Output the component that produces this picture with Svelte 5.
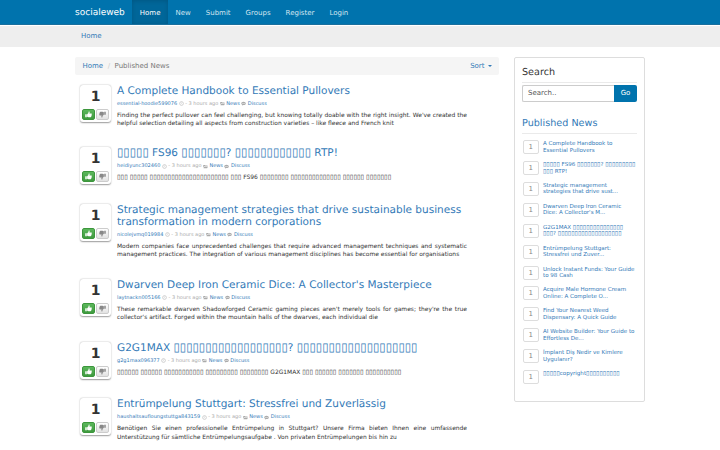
<script lang="ts">
  type Story = { title: string; user: string; body: string };

  const box = (n: number) => '▯'.repeat(n);

  const nav = ['Home', 'New', 'Submit', 'Groups', 'Register', 'Login'];

  const stories: Story[] = [
    {
      title: 'A Complete Handbook to Essential Pullovers',
      user: 'essential-hoodie599076',
      body: "Finding the perfect pullover can feel challenging, but knowing totally doable with the right insight. We've created the helpful selection detailing all aspects from construction varieties – like fleece and French knit"
    },
    {
      title: `${box(5)} FS96 ${box(7)}? ${box(12)} RTP!`,
      user: 'heidiyunc302460',
      body: `${box(3)} ${box(5)} ${box(22)} ${box(3)} FS96 ${box(8)} ${box(14)} ${box(6)} ${box(7)}`
    },
    {
      title: 'Strategic management strategies that drive sustainable business transformation in modern corporations',
      user: 'nicolejvmq019984',
      body: 'Modern companies face unprecedented challenges that require advanced management techniques and systematic management practices. The integration of various management disciplines has become essential for organisations'
    },
    {
      title: "Dwarven Deep Iron Ceramic Dice: A Collector's Masterpiece",
      user: 'laytnackn005166',
      body: "These remarkable dwarven Shadowforged Ceramic gaming pieces aren't merely tools for games; they're the true collector's artifact. Forged within the mountain halls of the dwarves, each individual die"
    },
    {
      title: `G2G1MAX ${box(18)}? ${box(19)}`,
      user: 'g2g1max096377',
      body: `${box(6)} ${box(6)} ${box(11)} ${box(9)} ${box(8)} G2G1MAX ${box(3)} ${box(6)} ${box(7)} ${box(10)}`
    },
    {
      title: 'Entrümpelung Stuttgart: Stressfrei und Zuverlässig',
      user: 'haushaltsaufloungstuttga843159',
      body: 'Benötigen Sie einen professionelle Entrümpelung in Stuttgart? Unsere Firma bieten Ihnen eine umfassende Unterstützung für sämtliche Entrümpelungsaufgabe . Von privaten Entrümpelungen bis hin zu'
    }
  ];

  const published = [
    'A Complete Handbook to\nEssential Pullovers',
    `${box(5)} FS96 ${box(7)}? ${box(9)}\n${box(3)} RTP!`,
    'Strategic management\nstrategies that drive sust...',
    "Dwarven Deep Iron Ceramic\nDice: A Collector's M...",
    `G2G1MAX ${box(15)}\n${box(3)}? ${box(19)}`,
    'Entrümpelung Stuttgart:\nStressfrei und Zuver...',
    'Unlock Instant Funds: Your Guide\nto 98 Cash',
    'Acquire Male Hormone Cream\nOnline: A Complete O...',
    'Find Your Nearest Weed\nDispensary: A Quick Guide',
    'AI Website Builder: Your Guide to\nEffortless De...',
    'İmplant Diş Nedir ve Kimlere\nUygulanır?',
    `${box(5)}copyright${box(10)}`
  ];
</script>

{#snippet thumb()}
  <svg class="thumb" viewBox="0 0 14 14">
    <path d="M0.5 6.5h3v6h-3z" />
    <path d="M4.3 6.7 6.6 4.4 7.4 1.2C8.8.8 9.6 2 9.2 3.6L8.8 5.2h3.6c1.3 0 1.5 1.3.8 1.9.6.6.5 1.5-.2 1.9.3.7.1 1.4-.6 1.8.1 1-.5 1.6-1.6 1.6H7.2c-1.2 0-1.9-.5-2.9-.8z" />
  </svg>
{/snippet}

{#snippet boxed(text: string)}{#each text.split(/(▯+)/) as part, i}{#if i % 2}<span class="boxes">{part}</span>{:else}{part}{/if}{/each}{/snippet}

<div class="page">
  <nav class="navbar">
    <div class="container nav-row">
      <a class="brand" href="#top">socialeweb</a>
      {#each nav as item, i}
        <a class="nav-link" class:active={i === 0} href="#top">{item}</a>
      {/each}
    </div>
  </nav>
  <div class="subnav">
    <div class="container"><a href="#top">Home</a></div>
  </div>

  <div class="container columns">
    <main>
      <div class="breadcrumb">
        <a href="#top">Home</a>
        <span class="slash">/</span>
        <span class="current">Published News</span>
        <a class="sort" href="#top">Sort <i class="caret"></i></a>
      </div>

      {#each stories as story}
        <article class="story">
          <div class="vote">
            <div class="count">1</div>
            <div class="buttons">
              <button class="up" aria-label="Vote up">{@render thumb()}</button>
              <button class="down" aria-label="Vote down">{@render thumb()}</button>
            </div>
          </div>
          <div class="content">
            <h2><a href="#top">{@render boxed(story.title)}</a></h2>
            <div class="meta">
              <a href="#top">{story.user}</a>
              <svg class="icon" viewBox="0 0 10 10"><circle cx="5" cy="5" r="3.8" fill="none" stroke="currentColor" stroke-width="1" /><path d="M5 2.8V5.3H3.6" fill="none" stroke="currentColor" stroke-width=".6" /></svg>
              <span>- 3 hours ago</span>
              <svg class="icon" viewBox="0 0 10 10"><path d="M.5 2h3.3l1 1H9v1.2H2.4L.5 8z" /><path d="M2.8 4.8H10L8.3 8.4H1z" /></svg>
              <a href="#top">News</a>
              <svg class="icon" viewBox="0 0 10 10"><path fill-rule="evenodd" d="M5 1.6c2.6 0 4.5 1.5 4.5 3.3S7.6 8.2 5 8.2L2 9.2 2.4 7.4C1.2 6.8.5 5.9.5 4.9.5 3.1 2.4 1.6 5 1.6zM2.5 4.2v1.2h1.2V4.2zm1.9 0v1.2h1.2V4.2zm1.9 0v1.2h1.2V4.2z" /></svg>
              <a href="#top">Discuss</a>
            </div>
            <p>{@render boxed(story.body)}</p>
          </div>
        </article>
      {/each}
    </main>

    <aside>
      <h3>Search</h3>
      <div class="search">
        <div class="field">Search..</div>
        <button class="go">Go</button>
      </div>
      <h3 class="second"><a href="#top">Published News</a></h3>
      <ul>
        {#each published as item}
          <li>
            <span class="badge">1</span>
            <a href="#top">{@render boxed(item)}</a>
          </li>
        {/each}
      </ul>
    </aside>
  </div>
</div>

<style>
  :global(body) { background: #fff; }
  .page {
    height: 450px;
    overflow: hidden;
    color: #333;
    font-family: "DejaVu Sans", sans-serif;
    font-size: 7px;
    line-height: 10px;
    text-rendering: geometricPrecision;
  }
  a { color: #337ab7; text-decoration: none; }
  .boxes { font-size: 1.1em; line-height: 0; white-space: nowrap; }
  .container { width: 570px; margin: 0 auto; }

  .navbar { background: #0073ad; height: 25px; border-bottom: 1px solid #1a6f9d; box-sizing: border-box; }
  .nav-row { display: flex; height: 100%; align-items: stretch; line-height: 26px; }
  .brand { color: #fff; font-size: 9px; padding-right: 7.5px; }
  .nav-link { color: #d3e6f0; padding: 0 7.5px; }
  .nav-link.active { color: #fff; background: #006699; box-shadow: inset 0 1px 4px rgba(0,0,0,0.15); }

  .subnav { background: #eee; height: 21px; margin-top: 1px; line-height: 20px; }
  .subnav .container { box-sizing: border-box; padding-left: 6px; }

  .columns { display: flex; justify-content: space-between; align-items: flex-start; padding-top: 10px; }
  main { width: 424px; }
  .breadcrumb {
    display: flex; height: 18px; line-height: 18px; padding: 0 7.5px;
    background: #f5f5f5; border-radius: 2px; margin-bottom: 9.5px;
  }
  .slash { color: #ccc; margin: 0 4.5px; }
  .current { color: #777; }
  .sort { margin-left: auto; display: flex; align-items: center; gap: 3px; }
  .caret { border: 2px solid transparent; border-top-color: #337ab7; border-bottom: 0; }

  .story { display: flex; min-height: 56.5px; padding-left: 5px; }
  .vote {
    width: 31px; height: 37px; box-sizing: border-box; margin-right: 6px; flex-shrink: 0;
    border-radius: 3px; background: #fff; box-shadow: 0 0.5px 1.5px rgba(0,0,0,0.4);
    padding: 3px 2px 0;
  }
  .count { font-size: 14px; font-weight: bold; line-height: 19px; text-align: center; }
  .buttons { display: flex; gap: 1px; margin-top: 2px; }
  .buttons button {
    width: 13px; height: 11px; padding: 0; border: 0.5px solid #ccc; border-radius: 2px;
    display: flex; align-items: center; justify-content: center;
  }
  .buttons .up { background: linear-gradient(#5bb75b, #3f9a3f); border-color: #3c963c; color: #fff; }
  .buttons .down { background: linear-gradient(#fff, #e2e2e2); color: #888; }
  .thumb { width: 7px; height: 7px; fill: currentColor; }
  .down .thumb { transform: rotate(180deg); }

  .content { width: 350px; }
  h2 { margin: 0; font-size: 10.5px; line-height: 12px; font-weight: normal; }
  .meta {
    display: flex; align-items: center; gap: 1.5px; height: 8px; margin-top: 3px;
    font-size: 5px; line-height: 8px; color: #aaa;
  }
  .icon { width: 5px; height: 5px; fill: currentColor; }
  .content p { margin: 4px 0 0; padding-bottom: 18.8px; font-size: 5.95px; line-height: 8.57px; text-align: justify; }

  aside {
    width: 131px; height: 345px; box-sizing: border-box; padding: 7.5px 7px 0;
    border: 1px solid #ddd; border-radius: 2px;
  }
  h3 { margin: 0; height: 16.5px; font-size: 9.65px; line-height: 13px; font-weight: normal; border-bottom: 1px solid #eaeaea; }
  .search { display: flex; height: 17px; margin-top: 1.5px; line-height: 15px; }
  .field {
    flex: 1; box-sizing: border-box; padding-left: 5px; color: #555;
    border: 1px solid #ccc; border-right: 0; border-radius: 2px 0 0 2px;
  }
  .go { width: 23px; padding: 0; background: #0073ad; color: #fff; border: 0; border-radius: 0 2px 2px 0; font: inherit; }
  h3.second { margin-top: 15px; }
  ul { list-style: none; margin: 6px 0 0; padding: 0; }
  li { display: flex; height: 20.93px; padding-left: 1px; gap: 4.5px; }
  .badge {
    width: 15.5px; height: 14px; box-sizing: border-box; line-height: 12px;
    border: 1px solid #ddd; border-radius: 2px; color: #888; text-align: center; flex-shrink: 0;
  }
  li a { font-size: 5.55px; line-height: 6.6px; padding-top: 1px; white-space: pre; }
</style>
